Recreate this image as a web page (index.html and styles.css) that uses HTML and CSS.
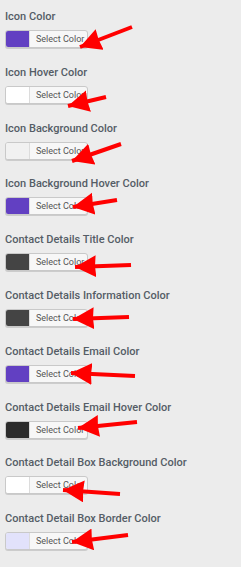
FILE: index.html
```html
<!DOCTYPE html>
<html lang="en">
<head>
  <meta charset="UTF-8">
  <title>Color Settings</title>
  <link rel="stylesheet" href="styles.css">
</head>
<body>

<div class="panel">
  <div class="field">
    <label>Icon Color</label>
    <button class="picker"><span class="swatch purple"></span><span class="picker-text">Select Color</span></button>
  </div>
  <div class="field">
    <label>Icon Hover Color</label>
    <button class="picker"><span class="swatch white"></span><span class="picker-text">Select Color</span></button>
  </div>
  <div class="field">
    <label>Icon Background Color</label>
    <button class="picker"><span class="swatch light"></span><span class="picker-text">Select Color</span></button>
  </div>
  <div class="field">
    <label>Icon Background Hover Color</label>
    <button class="picker"><span class="swatch purple"></span><span class="picker-text">Select Color</span></button>
  </div>
  <div class="field">
    <label>Contact Details Title Color</label>
    <button class="picker"><span class="swatch dark"></span><span class="picker-text">Select Color</span></button>
  </div>
  <div class="field">
    <label>Contact Details Information Color</label>
    <button class="picker"><span class="swatch dark"></span><span class="picker-text">Select Color</span></button>
  </div>
  <div class="field">
    <label>Contact Details Email Color</label>
    <button class="picker"><span class="swatch purple"></span><span class="picker-text">Select Color</span></button>
  </div>
  <div class="field">
    <label>Contact Details Email Hover Color</label>
    <button class="picker"><span class="swatch darker"></span><span class="picker-text">Select Color</span></button>
  </div>
  <div class="field">
    <label>Contact Detail Box Background Color</label>
    <button class="picker"><span class="swatch white"></span><span class="picker-text">Select Color</span></button>
  </div>
  <div class="field">
    <label>Contact Detail Box Border Color</label>
    <button class="picker"><span class="swatch lavender"></span><span class="picker-text">Select Color</span></button>
  </div>
</div>

<!-- annotation arrows drawn over the screenshot -->
<svg class="arrows" width="241" height="567" viewBox="0 0 241 567">
  <defs>
    <marker id="head" markerUnits="userSpaceOnUse" markerWidth="26" markerHeight="26" refX="21" refY="11" orient="auto">
      <polygon points="0,0 21,11 0,22 1,11" fill="#f00"/>
    </marker>
  </defs>
  <g stroke="#f00" stroke-width="4" marker-end="url(#head)">
    <line x1="132" y1="27" x2="80" y2="47"/>
    <line x1="106" y1="97" x2="68" y2="106"/>
    <line x1="121" y1="144" x2="72" y2="161"/>
    <line x1="117" y1="200" x2="73" y2="207"/>
    <line x1="131" y1="265" x2="75" y2="267"/>
    <line x1="129" y1="317" x2="73" y2="319"/>
    <line x1="135" y1="376" x2="71" y2="373"/>
    <line x1="137" y1="422" x2="78" y2="428"/>
    <line x1="120" y1="494" x2="63" y2="490"/>
    <line x1="128" y1="535" x2="72" y2="542"/>
  </g>
</svg>

</body>
</html>
```

FILE: styles.css
```css
body {
  margin: 0;
  padding: 0;
  background: #ececec;
  font-family: Roboto, "Liberation Sans", sans-serif;
  color: #555d66;
}
.panel {
  padding: 10px 5px 0;
}
.field {
  margin-bottom: 17.8px;
}
.field label {
  display: block;
  font-size: 11px;
  line-height: 14px;
  font-weight: 500;
  margin-bottom: 6px;
  white-space: nowrap;
}
.picker {
  display: flex;
  align-items: stretch;
  height: 18px;
  width: 83px;
  padding: 0;
  border: 1px solid #c9c9c9;
  border-radius: 3px;
  background: #f7f7f7;
  box-shadow: 0 1px 0 #ccc;
  overflow: hidden;
  font-family: Roboto, "Liberation Sans", sans-serif;
}
.swatch {
  width: 23px;
  border-right: 1px solid #dcdcdc;
}
.picker-text {
  flex: 1;
  font-size: 9px;
  line-height: 16px;
  color: #555;
  text-align: left;
  padding-left: 6px;
  white-space: nowrap;
}
.purple { background: #6240c2; }
.white { background: #fff; }
.light { background: #f1f1f1; }
.dark { background: #444; }
.darker { background: #2b2b2b; }
.lavender { background: #e2e2fb; }
.arrows {
  position: absolute;
  top: 0;
  left: 0;
  pointer-events: none;
}
```
